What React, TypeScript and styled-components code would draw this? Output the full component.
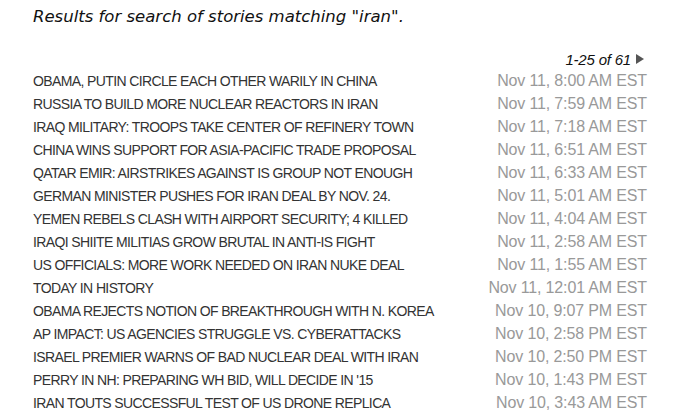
import React from "react";
import styled, { createGlobalStyle } from "styled-components";

interface Story {
  headline: string;
  time: string;
}

const stories: Story[] = [
  { headline: "OBAMA, PUTIN CIRCLE EACH OTHER WARILY IN CHINA", time: "Nov 11, 8:00 AM EST" },
  { headline: "RUSSIA TO BUILD MORE NUCLEAR REACTORS IN IRAN", time: "Nov 11, 7:59 AM EST" },
  { headline: "IRAQ MILITARY: TROOPS TAKE CENTER OF REFINERY TOWN", time: "Nov 11, 7:18 AM EST" },
  { headline: "CHINA WINS SUPPORT FOR ASIA-PACIFIC TRADE PROPOSAL", time: "Nov 11, 6:51 AM EST" },
  { headline: "QATAR EMIR: AIRSTRIKES AGAINST IS GROUP NOT ENOUGH", time: "Nov 11, 6:33 AM EST" },
  { headline: "GERMAN MINISTER PUSHES FOR IRAN DEAL BY NOV. 24.", time: "Nov 11, 5:01 AM EST" },
  { headline: "YEMEN REBELS CLASH WITH AIRPORT SECURITY; 4 KILLED", time: "Nov 11, 4:04 AM EST" },
  { headline: "IRAQI SHIITE MILITIAS GROW BRUTAL IN ANTI-IS FIGHT", time: "Nov 11, 2:58 AM EST" },
  { headline: "US OFFICIALS: MORE WORK NEEDED ON IRAN NUKE DEAL", time: "Nov 11, 1:55 AM EST" },
  { headline: "TODAY IN HISTORY", time: "Nov 11, 12:01 AM EST" },
  { headline: "OBAMA REJECTS NOTION OF BREAKTHROUGH WITH N. KOREA", time: "Nov 10, 9:07 PM EST" },
  { headline: "AP IMPACT: US AGENCIES STRUGGLE VS. CYBERATTACKS", time: "Nov 10, 2:58 PM EST" },
  { headline: "ISRAEL PREMIER WARNS OF BAD NUCLEAR DEAL WITH IRAN", time: "Nov 10, 2:50 PM EST" },
  { headline: "PERRY IN NH: PREPARING WH BID, WILL DECIDE IN '15", time: "Nov 10, 1:43 PM EST" },
  { headline: "IRAN TOUTS SUCCESSFUL TEST OF US DRONE REPLICA", time: "Nov 10, 3:43 AM EST" },
];

const GlobalStyle = createGlobalStyle`
  body {
    margin: 0;
    background: #ffffff;
    font-family: "Liberation Sans", Arial, sans-serif;
  }
`;

export default function App() {
  return (
    <>
      <GlobalStyle />
      <Page>
        <Heading>Results for search of stories matching "iran".</Heading>
        <Pager>
          <PagerText>1-25 of 61</PagerText>
          <NextArrow viewBox="0 0 8 10" aria-label="next page">
            <path d="M0 0 L8 5 L0 10 Z" fill="#555" />
          </NextArrow>
        </Pager>
        <List>
          {stories.map((s, i) => (
            <Row key={i}>
              <Headline href="#">{s.headline}</Headline>
              <Time>{s.time}</Time>
            </Row>
          ))}
        </List>
      </Page>
    </>
  );
}

const Page = styled.div`
  width: 614px;
  padding: 5px 0 0 33px;
`;

const Heading = styled.div`
  font-family: "DejaVu Sans", Verdana, sans-serif;
  font-style: italic;
  font-size: 16.5px;
  line-height: 24px;
  color: #111;
`;

const Pager = styled.div`
  display: flex;
  justify-content: flex-end;
  align-items: center;
  gap: 5px;
  margin-top: 20px;
  padding-right: 3px;
  height: 20px;
`;

const PagerText = styled.span`
  font-style: italic;
  font-size: 15px;
  color: #111;
  letter-spacing: -0.2px;
`;

const NextArrow = styled.svg`
  width: 8px;
  height: 10px;
`;

const List = styled.div`
  display: flex;
  flex-direction: column;
  margin-top: 0;
`;

const Row = styled.div`
  display: flex;
  justify-content: space-between;
  align-items: baseline;
  gap: 8px;
  height: 23px;
  line-height: 23px;
  white-space: nowrap;
`;

const Headline = styled.a`
  font-size: 14px;
  color: #333;
  text-decoration: none;
  letter-spacing: -0.62px;
`;

const Time = styled.span`
  font-size: 16px;
  color: #999;
  letter-spacing: -0.15px;
`;
